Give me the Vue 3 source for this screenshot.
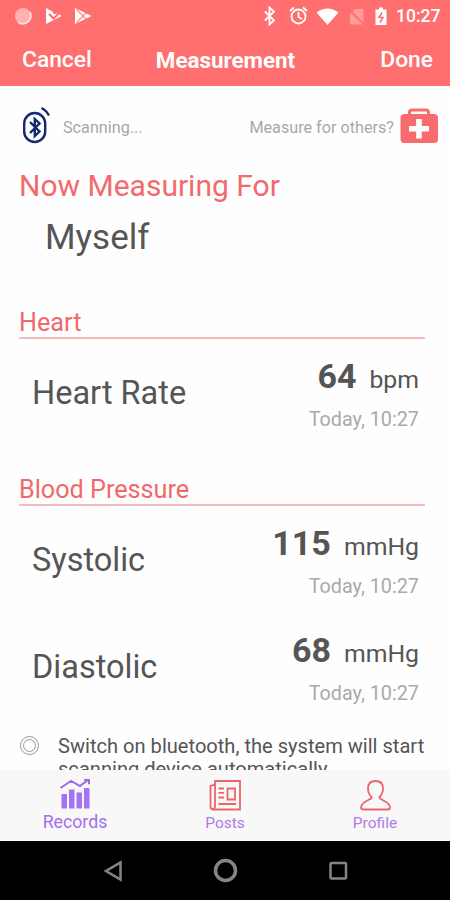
<template>
  <div class="screen">
    <!-- Status bar -->
    <div class="status">
      <svg class="status-left" width="80" height="20" viewBox="0 0 80 20">
        <circle cx="9" cy="10" r="8" fill="#ffb3b1" />
        <path d="M4 16a8 8 0 0 0 12-10" fill="none" stroke="#ffdcda" stroke-width="2" />
        <path d="M32 2l6 3.200 2 3 4-1 3.500 2.800L32 18z" fill="#fff" />
        <path d="M35 8l4.500 4.500 8-7.500" fill="none" stroke="#ff6f6f" stroke-width="2" />
        <path d="M61 2l16.500 8L61 18z" fill="#fff" />
        <path d="M62.500 3.500l9.500 9.500M62.500 16.500l9.500-9.500" stroke="#ff8583" stroke-width="1.200" />
      </svg>
      <div class="status-right">
        <svg width="125" height="20" viewBox="0 0 125 20">
          <path d="M2 5.500l9 9-4.500 4V1.500l4.500 4-9 9" fill="none" stroke="#fff" stroke-width="1.800" />
          <g fill="none" stroke="#fff" stroke-width="1.800">
            <circle cx="35.500" cy="10.500" r="7" />
            <path d="M35.500 6v5l3.500 2M27 5l4-3.500M44 5l-4-3.500" />
          </g>
          <path d="M53.500 6.500q11-8 22 0L64.500 19z" fill="#fff" />
          <path d="M87 18.500V8l5-5h8.500v15.500z" fill="#ff9c99" />
          <path d="M86 3.500l15 15" stroke="#ff6f6f" stroke-width="2" />
          <path d="M112.500 3.500h3.500V1.500h4v2h3.500V19h-11z" fill="#fff" />
          <path d="M119 6.500l-3 5h4l-3 5" fill="none" stroke="#ff6f6f" stroke-width="1.500" />
        </svg>
        <span class="clock">10:27</span>
      </div>
    </div>

    <header class="navbar">
      <a class="nav-link">Cancel</a>
      <h1>Measurement</h1>
      <a class="nav-link right">Done</a>
    </header>

    <main class="content">
      <div class="scan">
        <svg width="30" height="38" viewBox="0 0 30 38">
          <rect x="3.200" y="6" width="21" height="29" rx="10.500" fill="none" stroke="#14286f" stroke-width="2.400" />
          <path d="M9 15l9.500 9.500-4.700 4.500V12l4.700 4.500L9 26" fill="none" stroke="#14286f" stroke-width="2.400" />
          <path d="M20.500 1q5 2.500 7.500 7.500" fill="none" stroke="#14286f" stroke-width="2.200" />
        </svg>
        <span class="scan-text">Scanning...</span>
        <span class="others">Measure for others?</span>
        <svg width="38" height="36" viewBox="0 0 38 36">
          <path d="M9.500 7V4.500Q9.500 2 12 2h14Q28.500 2 28.500 4.500V7" fill="none" stroke="#f96b6d" stroke-width="3" />
          <rect x="0.500" y="6" width="37.500" height="29" rx="4" fill="#f96b6d" />
          <path d="M19 11v19.500M9 20.700h20" stroke="#fff" stroke-width="5.600" />
        </svg>
      </div>

      <h2 class="title">Now Measuring For</h2>
      <p class="person">Myself</p>

      <section v-for="section in sections" :key="section.name">
        <h3 class="section-title">{{ section.name }}</h3>
        <div v-for="item in section.items" :key="item.label" class="measure">
          <span class="label">{{ item.label }}</span>
          <div class="result">
            <div class="value"><b>{{ item.value }}</b><span class="unit">{{ item.unit }}</span></div>
            <div class="date">Today, 10:27</div>
          </div>
        </div>
      </section>

      <div class="tip">
        <svg width="20" height="20" viewBox="0 0 20 20" fill="none" stroke="#999">
          <circle cx="10.500" cy="10.500" r="9" />
          <circle cx="10.500" cy="10.500" r="6" />
        </svg>
        <p>Switch on bluetooth, the system will start<br>scanning device automatically.</p>
      </div>
    </main>

    <nav class="tabs">
      <a class="tab active">
        <svg width="32" height="32" viewBox="0 0 32 32">
          <path d="M2.500 15h5.500v14.500h-5.500zM10 10.500h5.500v19H10zM17.500 13.500H23v16h-5.500zM25 9h5.500v20.500H25z" fill="#a472f5" />
          <path d="M1.500 9L12 2l9 5L29 1M25 .800h5v4.500" fill="none" stroke="#9a6cdf" stroke-width="2" />
        </svg>
        <span>Records</span>
      </a>
      <a class="tab">
        <svg width="32" height="32" viewBox="0 0 32 32" fill="none" stroke="#ee6468" stroke-width="1.800">
          <path d="M6 2h25v28.500H4.500Q1.500 30.500 1.500 27.500V7L6 5.500z" />
          <path d="M6 5.500v21.500q0 2.500-2 3" />
          <path d="M9.500 9.500h5.500M9.500 13.800h5.500M9.500 18.500h5.500M9.500 25H27" />
          <path d="M18.500 9.500h7.500v11h-7.500z" />
        </svg>
        <span>Posts</span>
      </a>
      <a class="tab">
        <svg width="32" height="32" viewBox="0 0 32 32" fill="none" stroke="#ee6468" stroke-width="1.800">
          <path d="M16.500 2c5 0 7.500 3 7.500 7.500 0 4-1.500 6.500-3.500 8.500v1c1 2 10.500 3.500 10.500 9.500 0 1.500-1 2-2.500 2h-24c-1.500 0-2.500-.500-2.500-2 0-6 9.500-7.500 10.500-9.500V18C10.500 16 9 13.500 9 9.500 9 5 11.500 2 16.500 2z" />
        </svg>
        <span>Profile</span>
      </a>
    </nav>

    <div class="android">
      <svg width="20" height="22" viewBox="0 0 20 22"><path d="M18.500 2.500v17L4 11z" /></svg>
      <svg width="26" height="26" viewBox="0 0 26 26"><circle cx="13.500" cy="12.500" r="10" stroke-width="3.500" /></svg>
      <svg width="20" height="20" viewBox="0 0 20 20"><rect x="2.500" y="2" width="15.500" height="15.500" rx="1" /></svg>
    </div>
  </div>
</template>

<script setup>
const sections = [
  {
    name: 'Heart',
    items: [{ label: 'Heart Rate', value: 64, unit: 'bpm' }]
  },
  {
    name: 'Blood Pressure',
    items: [
      { label: 'Systolic', value: 115, unit: 'mmHg' },
      { label: 'Diastolic', value: 68, unit: 'mmHg' }
    ]
  }
];
</script>

<style>
body {
  margin: 0;
}
</style>

<style scoped>
.screen {
  width: 450px;
  height: 900px;
  display: flex;
  flex-direction: column;
  overflow: hidden;
  background: #fefefe;
  color: #555;
  font-family: Roboto, sans-serif;
}

svg {
  display: block;
  flex: none;
}

h1, h2, h3, p {
  margin: 0;
  font-weight: 400;
}

/* Top bars */
.status {
  height: 32px;
  flex: none;
  display: flex;
  justify-content: space-between;
  align-items: center;
  padding: 0 10px 0 14px;
  background: #ff6f6f;
}

.status-right {
  display: flex;
  align-items: center;
  gap: 8px;
}

.clock {
  color: #fff;
  font-size: 17.5px;
  font-weight: 500;
  width: 44px;
  white-space: nowrap;
}

.navbar {
  height: 54px;
  flex: none;
  display: grid;
  grid-template-columns: 1fr auto 1fr;
  padding: 0 17px 0 22px;
  background: #ff6f6f;
  color: #fff;
  line-height: 56px;
}

.navbar h1 {
  margin-right: 4px;
  font-size: 22.4px;
  font-weight: 700;
}

.nav-link {
  font-size: 22.8px;
  font-weight: 500;
}

.right {
  text-align: right;
}

/* Content */
.content {
  height: 684px;
  flex: none;
  overflow: hidden;
}

.scan {
  height: 80px;
  display: flex;
  align-items: center;
  padding: 0 12px 0 21px;
  color: #a8a8a8;
  font-size: 16.2px;
}

.scan-text {
  margin-left: 12px;
  padding-top: 2px;
}

.others {
  margin-left: auto;
  margin-right: 6px;
  padding-top: 2px;
}

.title {
  padding-left: 19px;
  font-size: 30px;
  line-height: 40px;
  color: #f36a6c;
}

.person {
  height: 73px;
  padding-left: 45px;
  font-size: 35px;
  line-height: 63px;
}

.section-title {
  box-sizing: border-box;
  height: 60px;
  margin: 0 25px 0 19px;
  padding-top: 24px;
  border-bottom: 2px solid #f2bcbc;
  font-size: 25.2px;
  line-height: 40px;
  color: #f0686b;
}

.measure {
  height: 107px;
  display: flex;
  justify-content: space-between;
  padding: 0 31px 0 32px;
}

.label {
  font-size: 32.5px;
  line-height: 108px;
}

.result {
  padding-top: 16px;
  text-align: right;
}

.value {
  height: 44px;
  line-height: 42px;
}

.value b {
  font-size: 34px;
}

.unit {
  margin-left: 13px;
  font-size: 24.8px;
}

.date {
  font-size: 19.8px;
  line-height: 40px;
  margin-top: 1px;
  color: #aaa;
}

.tip {
  display: flex;
  padding: 15px 0 0 19px;
}

.tip p {
  margin-left: 19px;
  font-size: 20.1px;
  line-height: 23px;
  white-space: nowrap;
}

/* Bottom tabs */
.tabs {
  box-sizing: border-box;
  height: 71px;
  flex: none;
  display: grid;
  grid-template-columns: repeat(3, 1fr);
  background: #f8f8f8;
  border-bottom: 1px solid #fff;
}

.tab {
  display: flex;
  flex-direction: column;
  align-items: center;
  padding-top: 9px;
  color: #b07be6;
  font-size: 15.5px;
  line-height: 24px;
}

.active {
  font-size: 17.7px;
  color: #a070ee;
}

.active span {
  margin-top: -1px;
}

.android {
  flex: 1;
  display: flex;
  align-items: center;
  justify-content: center;
  gap: 90px;
  background: #000;
}

.android svg {
  fill: none;
  stroke: #858585;
  stroke-width: 2.5;
}
</style>
